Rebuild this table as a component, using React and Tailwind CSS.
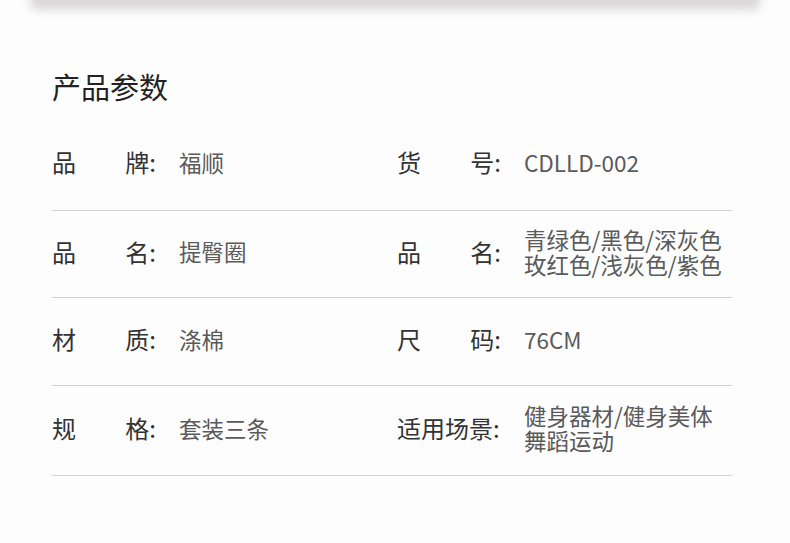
import React from "react";

const font = { fontFamily: '"Noto Sans CJK SC", "Noto Sans", sans-serif' };

function Label({ parts }) {
  return (
    <div className="flex w-[104px] shrink-0 justify-between text-[24px] font-normal leading-[30px] text-[#333333]">
      {parts.map((p, i) => (
        <span key={i}>{p}</span>
      ))}
    </div>
  );
}

function Cell({ parts, value }) {
  return (
    <div className="flex items-center">
      <Label parts={parts} />
      <div className="ml-[23px] text-[22.5px] font-normal leading-[25px] text-[#5a5a5a]">
        {value.map((v, i) => (
          <div key={i}>{v}</div>
        ))}
      </div>
    </div>
  );
}

const rows = [
  { h: "h-[92px]", l: { parts: ["品", "牌:"], value: ["福顺"] }, r: { parts: ["货", "号:"], value: ["CDLLD-002"] } },
  { h: "h-[87px]", l: { parts: ["品", "名:"], value: ["提臀圈"] }, r: { parts: ["品", "名:"], value: ["青绿色/黑色/深灰色", "玫红色/浅灰色/紫色"] } },
  { h: "h-[88px]", l: { parts: ["材", "质:"], value: ["涤棉"] }, r: { parts: ["尺", "码:"], value: ["76CM"] } },
  { h: "h-[90px]", l: { parts: ["规", "格:"], value: ["套装三条"] }, r: { parts: ["适用场景:"], value: ["健身器材/健身美体", "舞蹈运动"] } },
];

export default function App() {
  return (
    <div className="relative h-[543px] w-[790px] overflow-hidden bg-[#fdfdfd]" style={font}>
      <div className="mx-[30px] -mt-[12px] h-[22px] rounded-[8px] bg-[#d9d7d8] blur-[5px]" />
      <div className="px-[52px] pr-[58px]">
        <h1 className="mt-[56px] text-[29px] font-normal leading-[40px] text-[#222222]">产品参数</h1>
        <div className="mt-[13px]">
          {rows.map((row, i) => (
            <div key={i} className={`grid grid-cols-[345px_1fr] items-center border-b border-[#d2d2d2] pb-[5px] ${row.h}`}>
              <Cell {...row.l} />
              <Cell {...row.r} />
            </div>
          ))}
        </div>
      </div>
    </div>
  );
}
